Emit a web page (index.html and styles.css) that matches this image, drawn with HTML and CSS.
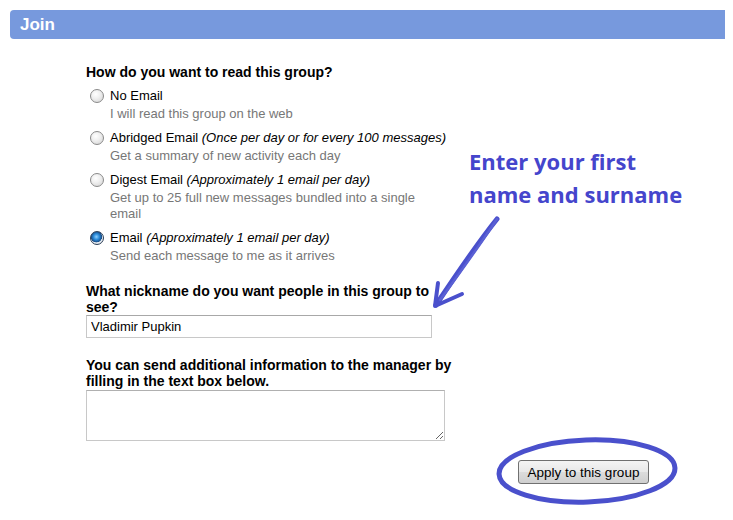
FILE: index.html
```html
<!DOCTYPE html>
<html>
<head>
<meta charset="utf-8">
<link rel="stylesheet" href="styles.css">
</head>
<body>
<div class="header"><span class="title">Join</span></div>
<form class="form">
  <div class="q">How do you want to read this group?</div>
  <div class="options">
    <div class="opt">
      <input type="radio" name="mode" class="radio">
      <div class="opt-text">
        <div class="name">No Email</div>
        <div class="desc">I will read this group on the web</div>
      </div>
    </div>
    <div class="opt">
      <input type="radio" name="mode" class="radio">
      <div class="opt-text">
        <div class="name">Abridged Email <i>(Once per day or for every 100 messages)</i></div>
        <div class="desc">Get a summary of new activity each day</div>
      </div>
    </div>
    <div class="opt">
      <input type="radio" name="mode" class="radio">
      <div class="opt-text">
        <div class="name">Digest Email <i>(Approximately 1 email per day)</i></div>
        <div class="desc">Get up to 25 full new messages bundled into a single email</div>
      </div>
    </div>
    <div class="opt">
      <input type="radio" name="mode" class="radio" checked>
      <div class="opt-text">
        <div class="name">Email <i>(Approximately 1 email per day)</i></div>
        <div class="desc">Send each message to me as it arrives</div>
      </div>
    </div>
  </div>
  <div class="q q-nick">What nickname do you want people in this group to see?</div>
  <input type="text" class="nick" value="Vladimir Pupkin">
  <div class="q q-info">You can send additional information to the manager by filling in the text box below.</div>
  <textarea class="info"></textarea>
</form>
<div class="actions"><button type="button" class="apply">Apply to this group</button></div>

<div class="note">Enter your first<br>name and surname</div>
<svg class="marks" width="733" height="520" viewBox="0 0 733 520">
  <path d="M497 219 C 480 240, 458 272, 436 305" stroke="#4a50cc" stroke-width="5" fill="none" stroke-linecap="round"/>
  <path d="M497 219 C 482 242, 462 270, 440 300" stroke="#5a60d4" stroke-width="2.5" fill="none" stroke-linecap="round"/>
  <path d="M438 283 L435 306 L462 294" stroke="#4a50cc" stroke-width="4" fill="none" stroke-linecap="round" stroke-linejoin="round"/>
  <ellipse cx="587" cy="471" rx="88" ry="31" stroke="#4a50cc" stroke-width="5" fill="none" transform="rotate(-2 587 471)"/>
</svg>
</body>
</html>
```
FILE: styles.css
```css
html, body {
  margin: 0;
  padding: 0;
  background: #ffffff;
}
body {
  font-family: "Liberation Sans", Arial, sans-serif;
  font-size: 13px;
  color: #000;
  position: relative;
  width: 733px;
  height: 520px;
  overflow: hidden;
}
.header {
  margin: 10px 8px 0 10px;
  height: 29px;
  background: #7799dd;
  border-radius: 4px 0 0 4px;
  display: flex;
  align-items: center;
  padding-left: 10px;
}
.title {
  color: #fff;
  font-weight: bold;
  font-size: 17px;
}
.form {
  margin: 25px 0 0 86px;
  width: 370px;
  display: flex;
  flex-direction: column;
}
.q {
  font-weight: bold;
  font-size: 14px;
  line-height: 16px;
}
.q-nick {
  width: 362px;
}
.options {
  margin-top: 6px;
  display: flex;
  flex-direction: column;
  gap: 6px;
}
.opt {
  display: grid;
  grid-template-columns: 24px 1fr;
}
.radio {
  -webkit-appearance: none;
  appearance: none;
  margin: 3px 0 0 4px;
  width: 14px;
  height: 14px;
  border-radius: 50%;
  border: 1px solid #8a8a8a;
  background: radial-gradient(circle at 40% 35%, #ffffff 0%, #f0f0f0 40%, #d0d0d0 100%);
  box-sizing: border-box;
}
.radio:checked {
  border-color: #2c3e56;
  background: radial-gradient(circle at 45% 40%, #8fd0ff 0%, #2a8ad8 30%, #1a4d86 55%, #e8eef4 60%, #cfd6de 100%);
}
.name {
  line-height: 20px;
}
.desc {
  color: #777;
  line-height: 16px;
  padding-right: 34px;
}
.q-nick {
  margin-top: 19px;
}
.nick {
  margin: 0;
  width: 346px;
  height: 23px;
  box-sizing: border-box;
  border: 1px solid #c8c8c8;
  border-top-color: #a8a8a8;
  padding: 0 4px;
  font-family: "Liberation Sans", Arial, sans-serif;
  font-size: 13px;
  color: #000;
}
.q-info {
  margin-top: 19px;
}
.info {
  margin: 1px 0 0 0;
  width: 359px;
  height: 51px;
  box-sizing: border-box;
  border: 1px solid #c8c8c8;
  border-top-color: #b0b0b0;
  resize: both;
  font-family: "Liberation Sans", Arial, sans-serif;
}
.actions {
  margin: 19px 0 0 518px;
}
.apply {
  width: 131px;
  height: 24px;
  border: 1px solid #707070;
  border-radius: 3px;
  background: linear-gradient(#f4f4f4, #e8e8e8 50%, #dcdcdc 51%, #cfcfcf);
  font-family: "Liberation Sans", Arial, sans-serif;
  font-size: 13.5px;
  color: #000;
  padding: 0;
}
.note {
  position: absolute;
  left: 469px;
  top: 145px;
  font-family: "Open Sans", sans-serif;
  font-weight: 700;
  font-size: 22px;
  line-height: 33px;
  color: #4545cc;
}
.marks {
  position: absolute;
  left: 0;
  top: 0;
  pointer-events: none;
}
```
